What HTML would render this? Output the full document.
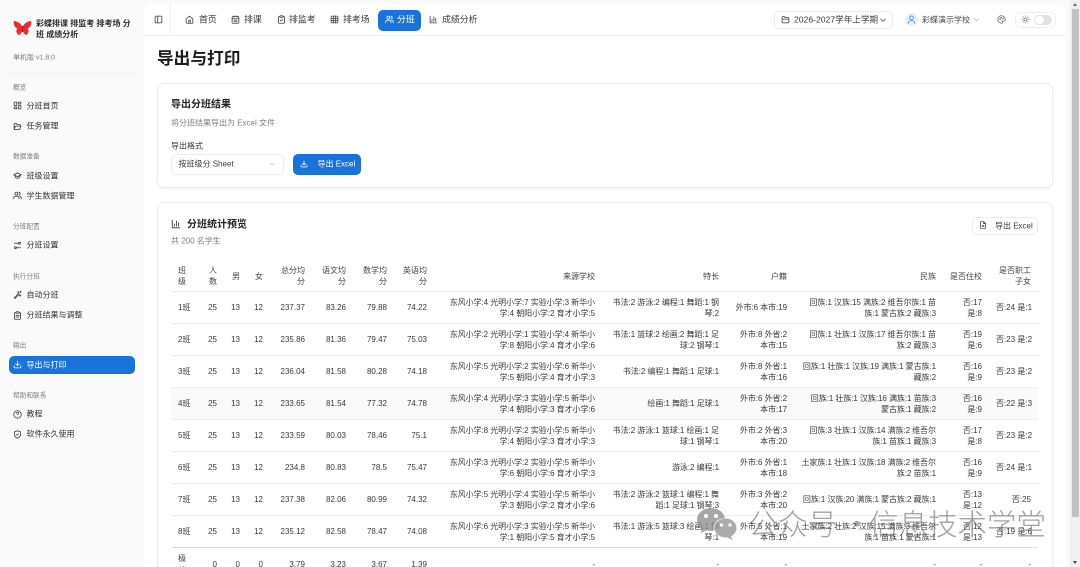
<!DOCTYPE html>
<html lang="zh-CN"><head><meta charset="utf-8"><title>导出与打印</title>
<style>
*{box-sizing:border-box}
html,body{margin:0;padding:0;width:1080px;height:567px;overflow:hidden;background:#fafafa}
body{position:relative;font:8px/11.5px "Liberation Sans","Noto Sans CJK SC",sans-serif;color:#333}
.a{position:absolute;white-space:nowrap}
.c{transform:translateY(-50%)}
svg.i{position:absolute;fill:none;stroke:currentColor;stroke-width:2.1;stroke-linecap:round;stroke-linejoin:round;overflow:visible}
.lab{left:13px;font-size:6.7px;color:#7d7d7d}
.it{left:26.5px;color:#333}
.side svg.i{left:13px;width:9px;height:9px;color:#333}
.nav{font-size:8.9px;color:#3a3a3a}
.top svg.i{width:9px;height:9px;color:#3a3a3a}
.card{position:absolute;left:157px;width:895.5px;background:#fff;border:1px solid #ececec;border-radius:7px;box-shadow:0 1px 2px rgba(0,0,0,.06)}
table{position:absolute;left:171px;top:260px;width:867px;border-collapse:separate;border-spacing:0;table-layout:fixed;font-size:8px;line-height:11.5px;color:#383838}
th,td{padding:2px 7px 0;text-align:right;white-space:nowrap;font-weight:400;border-bottom:1px solid #eeeeee;height:32px;vertical-align:middle}
td:nth-child(n+9):nth-child(-n+12){letter-spacing:-.06px}
th{height:31.5px;color:#444}
th:first-child,td:first-child{text-align:left}
tr.g td{background:#fafafa}
tr.last td{border-bottom:none}
tr.e td{border-bottom:1px solid #dedede}
.wm{color:rgba(105,105,105,.62);font-family:"Noto Sans CJK SC",sans-serif;font-weight:300;font-size:29.5px;line-height:34px}
</style></head>
<body>
<svg width="0" height="0" style="position:absolute">
<defs>
<symbol id="dl" viewBox="0 0 24 24"><path d="M21 15v4a2 2 0 0 1-2 2H5a2 2 0 0 1-2-2v-4M7 10l5 5 5-5M12 15V3"/></symbol>
<symbol id="chart" viewBox="0 0 24 24"><path d="M3 3v18h18M8 17v-5M13 17V5M18 17v-8"/></symbol>
<symbol id="users" viewBox="0 0 24 24"><circle cx="9" cy="7" r="4"/><path d="M2 21v-2a5 5 0 0 1 5-5h4a5 5 0 0 1 5 5v2M16 3.1a4 4 0 0 1 0 7.8M22 21v-2a5 5 0 0 0-4-4.8"/></symbol>
<symbol id="folder" viewBox="0 0 24 24"><path d="M3 19V6a2 2 0 0 1 2-2h4l2 3h8a2 2 0 0 1 2 2v10a2 2 0 0 1-2 2H5a2 2 0 0 1-2-2zM3 11h18"/></symbol>
<symbol id="chev" viewBox="0 0 24 24"><path d="M5 9l7 7 7-7"/></symbol>
</defs>
</svg>

<!-- scrollbar -->
<div class="a" style="left:1070px;top:0;width:10px;height:567px;background:#f1f1f1"></div>
<div class="a" style="left:1071.5px;top:9px;width:7.5px;height:508px;background:#c1c1c1"></div>
<div class="a" style="left:1073px;top:3px;border:2.5px solid transparent;border-bottom:3px solid #666;border-top:0"></div>
<div class="a" style="left:1073px;top:561px;border:2.5px solid transparent;border-top:3px solid #444;border-bottom:0"></div>

<!-- main panel -->
<div class="a" style="left:144px;top:4px;width:922px;height:563px;background:#fff;border-radius:8px 8px 0 0"></div>
<div class="a" style="left:144px;top:35px;width:922px;height:1px;background:#f0f0f0"></div>
<div class="a" style="left:170px;top:4px;width:1px;height:31px;background:#f2f2f2"></div>

<!-- sidebar -->
<div class="side">
<svg class="a" style="left:13px;top:20px" width="19" height="17" viewBox="0 0 19 17"><path d="M9.5 7C8 3.5 4 .8 .8 1.2 .2 4 1.500 7.500 4.500 8.600 2.800 9.500 3 12.500 5 14.500 7 16 8.600 13 9.500 10 10.400 13 12 16 14 14.500 16 12.500 16.200 9.500 14.500 8.600 17.500 7.500 18.800 4 18.200 1.200 15 .8 11 3.500 9.500 7z" fill="#ee2c2c"/><path d="M9.500 6v6" stroke="#8a1f1f" stroke-width="1"/></svg>
<div class="a" style="left:36px;top:17.5px;font-weight:700;color:#2b2b2b;line-height:11.5px">彩蝶排课 排监考 排考场 分<br>班 成绩分析</div>
<div class="a c" style="left:13px;top:57.5px;font-size:7px;color:#808080">单机版 v1.8.0</div>
<div class="a" style="left:4px;top:73px;width:135px;height:1px;background:#f0f0f0"></div>

<div class="a c lab" style="top:87.5px">概览</div>
<svg class="i" style="top:101px" viewBox="0 0 24 24"><rect x="3" y="3" width="7" height="9" rx="1"/><rect x="14" y="3" width="7" height="5" rx="1"/><rect x="14" y="12" width="7" height="9" rx="1"/><rect x="3" y="16" width="7" height="5" rx="1"/></svg>
<div class="a c it" style="top:105.5px">分班首页</div>
<svg class="i" style="top:121.5px" viewBox="0 0 24 24"><path d="M3 19V6a2 2 0 0 1 2-2h4l2 3h7a2 2 0 0 1 2 2v2M3 19l3-7a2 2 0 0 1 2-1h13l-3 8a2 2 0 0 1-2 1H5a2 2 0 0 1-2-1z"/></svg>
<div class="a c it" style="top:126px">任务管理</div>

<div class="a c lab" style="top:157px">数据准备</div>
<svg class="i" style="top:171px" viewBox="0 0 24 24"><path d="M12 5L2 10l10 5 10-5zM6 12.500V17c3 3 9 3 12 0v-4.500"/></svg>
<div class="a c it" style="top:175.5px">班级设置</div>
<svg class="i" style="top:191px"><use href="#users" width="9" height="9"/></svg>
<div class="a c it" style="top:195.5px">学生数据管理</div>

<div class="a c lab" style="top:227px">分班配置</div>
<svg class="i" style="top:240.5px" viewBox="0 0 24 24"><path d="M14 6H4M20 18H10"/><circle cx="17.500" cy="6" r="2.500"/><circle cx="6.500" cy="18" r="2.500"/></svg>
<div class="a c it" style="top:245px">分班设置</div>

<div class="a c lab" style="top:276.5px">执行分班</div>
<svg class="i" style="top:290px" viewBox="0 0 24 24"><path d="M3 21L15 9l2 2L5 23zM14 4v3M12.500 5.500h3M20 3v4M18 5h4M19 13v4M17 15h4"/></svg>
<div class="a c it" style="top:294.5px">自动分班</div>
<svg class="i" style="top:310.5px" viewBox="0 0 24 24"><rect x="8" y="2" width="8" height="4" rx="1"/><path d="M8 4H6a2 2 0 0 0-2 2v14a2 2 0 0 0 2 2h12a2 2 0 0 0 2-2V6a2 2 0 0 0-2-2h-2M8 12h8M8 16h8"/></svg>
<div class="a c it" style="top:315px">分班结果与调整</div>

<div class="a c lab" style="top:346px">输出</div>
<div class="a" style="left:8.5px;top:356px;width:126px;height:18px;background:#1a73d8;border-radius:5px"></div>
<svg class="i" style="top:360px;color:#fff"><use href="#dl" width="9" height="9"/></svg>
<div class="a c it" style="top:364.5px;color:#fff">导出与打印</div>

<div class="a c lab" style="top:395.5px">帮助和联系</div>
<svg class="i" style="top:409.5px" viewBox="0 0 24 24"><circle cx="12" cy="12" r="10"/><path d="M9 9a3 3 0 0 1 6 .5c0 2-3 3-3 3M12 17h.01"/></svg>
<div class="a c it" style="top:414px">教程</div>
<svg class="i" style="top:429.5px" viewBox="0 0 24 24"><path d="M12 2l8 3v7c0 5-3.500 8-8 10-4.500-2-8-5-8-10V5zM9 12l2 2 4-4"/></svg>
<div class="a c it" style="top:434px">软件永久使用</div>
</div>

<!-- top nav -->
<div class="top">
<svg class="i" style="left:154px;top:15px" viewBox="0 0 24 24"><rect x="3" y="3" width="18" height="18" rx="3"/><path d="M10 3v18"/></svg>
<svg class="i" style="left:185px;top:15px" viewBox="0 0 24 24"><path d="M3 10l9-7 9 7v10a2 2 0 0 1-2 2H5a2 2 0 0 1-2-2zM10 22v-8h4v8"/></svg>
<div class="a c nav" style="left:199px;top:19.5px">首页</div>
<svg class="i" style="left:231px;top:15px" viewBox="0 0 24 24"><rect x="3" y="4" width="18" height="18" rx="2"/><path d="M8 2v4M16 2v4M3 10h18M8 14h8M8 18h8"/></svg>
<div class="a c nav" style="left:244px;top:19.5px">排课</div>
<svg class="i" style="left:276.5px;top:15px" viewBox="0 0 24 24"><rect x="8" y="2" width="8" height="4" rx="1"/><path d="M8 4H6a2 2 0 0 0-2 2v14a2 2 0 0 0 2 2h12a2 2 0 0 0 2-2V6a2 2 0 0 0-2-2h-2M9 14l2 2 4-4"/></svg>
<div class="a c nav" style="left:289px;top:19.5px">排监考</div>
<svg class="i" style="left:330px;top:15px" viewBox="0 0 24 24"><rect x="3" y="3" width="18" height="18" rx="2"/><path d="M3 9h18M3 15h18M9 3v18M15 3v18"/></svg>
<div class="a c nav" style="left:343px;top:19.5px">排考场</div>
<div class="a" style="left:378px;top:9.5px;width:43px;height:21px;background:#1a73d8;border-radius:5px"></div>
<svg class="i" style="left:385px;top:15px;color:#fff"><use href="#users" width="9" height="9"/></svg>
<div class="a c nav" style="left:397px;top:19.5px;color:#fff">分班</div>
<svg class="i" style="left:429px;top:15px"><use href="#chart" width="9" height="9"/></svg>
<div class="a c nav" style="left:442px;top:19.5px">成绩分析</div>

<div class="a" style="left:774px;top:11px;width:119px;height:17.5px;border:1px solid #ededed;border-radius:5px;background:#fff"></div>
<svg class="i" style="left:781px;top:15px"><use href="#folder" width="9" height="9"/></svg>
<div class="a c nav" style="left:794px;top:19.5px;font-size:8.6px">2026-2027学年上学期</div>
<svg class="i" style="left:878.5px;top:15.5px;width:8px;height:8px"><use href="#chev" width="8" height="8"/></svg>

<div class="a" style="left:905px;top:13px;width:13px;height:13px;border-radius:50%;background:#e6f0fb"></div>
<svg class="i" style="left:907px;top:15px;color:#3f86dc" viewBox="0 0 24 24"><circle cx="12" cy="7.500" r="5"/><path d="M3 23c0-5 4-8 9-8s9 3 9 8"/></svg>
<div class="a c" style="left:922px;top:19.5px;color:#444">彩蝶演示学校</div>
<svg class="i" style="left:973px;top:16px;width:7px;height:7px;color:#aaa"><use href="#chev" width="7" height="7"/></svg>
<svg class="i" style="left:997px;top:15px;color:#666" viewBox="0 0 24 24"><path d="M12 22a10 10 0 1 1 10-10c0 3-2 4-4 4h-2c-2 0-2.500 2-1.500 3 1 1.500-.5 3-2.500 3z"/><circle cx="8" cy="11" r="1"/><circle cx="11" cy="7" r="1"/><circle cx="16" cy="9" r="1"/></svg>
<div class="a" style="left:1015px;top:11.5px;width:41px;height:16px;border:1px solid #efefef;border-radius:5px;background:#fff"></div>
<svg class="i" style="left:1021px;top:15px;color:#777" viewBox="0 0 24 24"><circle cx="12" cy="12" r="4"/><path d="M12 2v2M12 20v2M2 12h2M20 12h2M5 5l1.500 1.500M17.500 17.500L19 19M5 19l1.500-1.500M17.500 6.500L19 5"/></svg>
<div class="a" style="left:1034px;top:14.5px;width:18px;height:10.5px;border-radius:6px;background:#e2e2e2"></div>
<div class="a" style="left:1035px;top:15.5px;width:8.5px;height:8.5px;border-radius:50%;background:#fff"></div>
</div>

<div class="a c" style="left:157px;top:59px;font-size:16.7px;font-weight:700;color:#1c1c1c;line-height:20px">导出与打印</div>

<!-- card 1 -->
<div class="card" style="top:83px;height:105px"></div>
<div class="a c" style="left:171px;top:105px;font-size:10px;font-weight:700;color:#222">导出分班结果</div>
<div class="a c" style="left:171px;top:122.5px;color:#808080">将分班结果导出为 Excel 文件</div>
<div class="a c" style="left:171px;top:145.5px;color:#333">导出格式</div>
<div class="a" style="left:171px;top:154px;width:113px;height:20.5px;border:1px solid #ececec;border-radius:5px;background:#fff"></div>
<div class="a c" style="left:178.5px;top:164px;color:#3a3a3a">按班级分 Sheet</div>
<svg class="i" style="left:269px;top:161px;width:6.5px;height:6.5px;color:#aaa"><use href="#chev" width="6.5" height="6.5"/></svg>
<div class="a" style="left:292.5px;top:154px;width:68.5px;height:20.5px;background:#1a73d8;border-radius:5px"></div>
<svg class="i" style="left:300px;top:160px;width:8px;height:8px;color:#fff"><use href="#dl" width="8" height="8"/></svg>
<div class="a c" style="left:317.5px;top:164px;color:#fff">导出 Excel</div>

<!-- card 2 -->
<div class="card" style="top:202px;height:380px"></div>
<svg class="i" style="left:171px;top:219px;width:10px;height:10px;color:#333"><use href="#chart" width="10" height="10"/></svg>
<div class="a c" style="left:187px;top:225px;font-size:10px;font-weight:700;color:#222">分班统计预览</div>
<div class="a c" style="left:171px;top:241px;color:#808080">共 200 名学生</div>
<div class="a" style="left:972px;top:216.5px;width:66px;height:18px;border:1px solid #ececec;border-radius:5px;background:#fff"></div>
<svg class="i" style="left:978.5px;top:221px;width:8px;height:8px;color:#333" viewBox="0 0 24 24"><path d="M14 2H6a2 2 0 0 0-2 2v16a2 2 0 0 0 2 2h12a2 2 0 0 0 2-2V8zM14 2v6h6M9 13h6M9 17h6"/></svg>
<div class="a c" style="left:995px;top:225.5px;color:#3a3a3a">导出 Excel</div>

<table>
<colgroup><col style="width:28px"><col style="width:25px"><col style="width:23px"><col style="width:23px"><col style="width:42px"><col style="width:41px"><col style="width:41px"><col style="width:40px"><col style="width:168px"><col style="width:124px"><col style="width:68px"><col style="width:149px"><col style="width:46px"><col style="width:49px"></colgroup>
<thead><tr><th>班<br>级</th><th>人<br>数</th><th>男</th><th>女</th><th>总分均<br>分</th><th>语文均<br>分</th><th>数学均<br>分</th><th>英语均<br>分</th><th>来源学校</th><th>特长</th><th>户籍</th><th>民族</th><th>是否住校</th><th>是否职工<br>子女</th></tr></thead>
<tbody>
<tr><td>1班</td><td>25</td><td>13</td><td>12</td><td>237.37</td><td>83.26</td><td>79.88</td><td>74.22</td><td>东风小学:4 光明小学:7 实验小学:3 新华小<br>学:4 朝阳小学:2 育才小学:5</td><td>书法:2 游泳:2 编程:1 舞蹈:1 钢<br>琴:2</td><td>外市:6 本市:19</td><td>回族:1 汉族:15 满族:2 维吾尔族:1 苗<br>族:1 蒙古族:2 藏族:3</td><td>否:17<br>是:8</td><td>否:24 是:1</td></tr>
<tr><td>2班</td><td>25</td><td>13</td><td>12</td><td>235.86</td><td>81.36</td><td>79.47</td><td>75.03</td><td>东风小学:2 光明小学:1 实验小学:4 新华小<br>学:8 朝阳小学:4 育才小学:6</td><td>书法:1 篮球:2 绘画:2 舞蹈:1 足<br>球:2 钢琴:1</td><td>外市:8 外省:2<br>本市:15</td><td>回族:1 壮族:1 汉族:17 维吾尔族:1 苗<br>族:2 藏族:3</td><td>否:19<br>是:6</td><td>否:23 是:2</td></tr>
<tr><td>3班</td><td>25</td><td>13</td><td>12</td><td>236.04</td><td>81.58</td><td>80.28</td><td>74.18</td><td>东风小学:5 光明小学:2 实验小学:6 新华小<br>学:5 朝阳小学:4 育才小学:3</td><td>书法:2 编程:1 舞蹈:1 足球:1</td><td>外市:8 外省:1<br>本市:16</td><td>回族:1 壮族:1 汉族:19 满族:1 蒙古族:1<br>藏族:2</td><td>否:16<br>是:9</td><td>否:23 是:2</td></tr>
<tr class="g"><td>4班</td><td>25</td><td>13</td><td>12</td><td>233.65</td><td>81.54</td><td>77.32</td><td>74.78</td><td>东风小学:4 光明小学:3 实验小学:5 新华小<br>学:4 朝阳小学:3 育才小学:6</td><td>绘画:1 舞蹈:1 足球:1</td><td>外市:6 外省:2<br>本市:17</td><td>回族:1 壮族:1 汉族:16 满族:1 苗族:3<br>蒙古族:1 藏族:2</td><td>否:16<br>是:9</td><td>否:22 是:3</td></tr>
<tr><td>5班</td><td>25</td><td>13</td><td>12</td><td>233.59</td><td>80.03</td><td>78.46</td><td>75.1</td><td>东风小学:8 光明小学:2 实验小学:5 新华小<br>学:4 朝阳小学:3 育才小学:3</td><td>书法:2 游泳:1 篮球:1 绘画:1 足<br>球:1 钢琴:1</td><td>外市:2 外省:3<br>本市:20</td><td>回族:3 壮族:1 汉族:14 满族:2 维吾尔<br>族:1 苗族:1 藏族:3</td><td>否:17<br>是:8</td><td>否:23 是:2</td></tr>
<tr><td>6班</td><td>25</td><td>13</td><td>12</td><td>234.8</td><td>80.83</td><td>78.5</td><td>75.47</td><td>东风小学:3 光明小学:2 实验小学:5 新华小<br>学:6 朝阳小学:6 育才小学:3</td><td>游泳:2 编程:1</td><td>外市:6 外省:1<br>本市:18</td><td>土家族:1 壮族:1 汉族:18 满族:2 维吾尔<br>族:2 苗族:1</td><td>否:16<br>是:9</td><td>否:24 是:1</td></tr>
<tr><td>7班</td><td>25</td><td>13</td><td>12</td><td>237.38</td><td>82.06</td><td>80.99</td><td>74.32</td><td>东风小学:5 光明小学:4 实验小学:5 新华小<br>学:3 朝阳小学:2 育才小学:6</td><td>书法:2 游泳:2 篮球:1 编程:1 舞<br>蹈:1 足球:1 钢琴:3</td><td>外市:3 外省:2<br>本市:20</td><td>回族:1 汉族:20 满族:1 蒙古族:2 藏族:1</td><td>否:13<br>是:12</td><td>否:25</td></tr>
<tr class="e"><td>8班</td><td>25</td><td>13</td><td>12</td><td>235.12</td><td>82.58</td><td>78.47</td><td>74.08</td><td>东风小学:6 光明小学:3 实验小学:5 新华小<br>学:1 朝阳小学:5 育才小学:5</td><td>书法:1 游泳:5 篮球:3 绘画:1 钢<br>琴:1</td><td>外市:5 外省:1<br>本市:19</td><td>土家族:2 壮族:2 汉族:15 满族:3 维吾尔<br>族:1 苗族:1 蒙古族:1</td><td>否:12<br>是:13</td><td>否:19 是:6</td></tr>
<tr class="last"><td>极<br>差</td><td>0</td><td>0</td><td>0</td><td>3.79</td><td>3.23</td><td>3.67</td><td>1.39</td><td>-</td><td>-</td><td>-</td><td>-</td><td>-</td><td>-</td></tr>
</tbody></table>

<!-- watermark -->
<svg class="a" style="left:697px;top:508px" width="40" height="32" viewBox="0 0 40 32"><g opacity=".78"><ellipse cx="14" cy="11.500" rx="14" ry="11.500" fill="#8f8f8f"/><path d="M5 19l-1 6 6-3z" fill="#8f8f8f"/><ellipse cx="28.500" cy="20" rx="12" ry="10" fill="#fff"/><ellipse cx="28.500" cy="20" rx="11" ry="9.500" fill="#969696"/><path d="M33 27l3 5-7-3z" fill="#969696"/><circle cx="9" cy="8" r="2" fill="#fff"/><circle cx="19" cy="8" r="2" fill="#fff"/><circle cx="24.500" cy="17" r="1.600" fill="#fff"/><circle cx="33" cy="17" r="1.600" fill="#fff"/></g></svg>
<div class="a wm" style="left:748px;top:506px;letter-spacing:.3px">公众号</div>
<div class="a wm" style="left:842px;top:506px">·</div>
<div class="a wm" style="left:869px;top:506px">信息技术学堂</div>
</body></html>
